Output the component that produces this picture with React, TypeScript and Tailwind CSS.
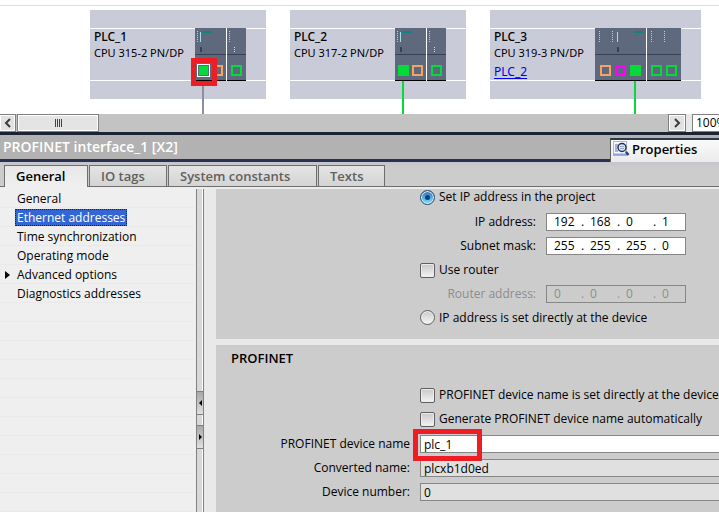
import React from "react";

type Port = { x: number; color: string; filled?: boolean; selected?: boolean };

function Ports({ ports }: { ports: Port[] }) {
  return (
    <>
      {ports.map((p) => (
        <g key={p.x}>
          {p.selected && (
            <path d={`M${p.x - 1.5} 36.500h12v12h-12z`} fill="#5f697d" stroke="#fff" />
          )}
          {p.filled ? (
            <rect
              x={p.selected ? p.x : p.x}
              y={p.selected ? 38 : 37}
              width={p.selected ? 9 : 11}
              height={p.selected ? 9 : 11}
              fill={p.color}
            />
          ) : (
            <rect x={p.x + 1} y="38" width="9" height="9" fill="none" stroke={p.color} strokeWidth="2" />
          )}
        </g>
      ))}
    </>
  );
}

function Module({
  width,
  dots,
  ports,
  label,
  led,
  bar,
  shortDots,
}: {
  width: number;
  dots: number[];
  ports: Port[];
  label: string;
  led?: number;
  bar?: number;
  shortDots?: number;
}) {
  return (
    <svg width={width} height="53" viewBox={`0 0 ${width} 53`} role="img" aria-label={label} shapeRendering="crispEdges">
      <rect width={width} height="53" fill="#5f697d" />
      {dots.map((x) => (
        <line key={x} x1={x + 0.5} x2={x + 0.5} y1="3" y2="14" stroke="#c3cad6" strokeDasharray="1 1" />
      ))}
      {led !== undefined && (
        <>
          <rect x={led} y="4" width="1" height="10" fill="#a8dbe2" />
          <rect x={led} y="19" width="2" height="5" fill="#394254" />
        </>
      )}
      {bar !== undefined && <rect x={bar} y="3" width="9" height="2" fill="#118080" />}
      {shortDots !== undefined && (
        <line x1={shortDots + 0.5} x2={shortDots + 0.5} y1="19" y2="24" stroke="#d5dae3" strokeDasharray="1 1" />
      )}
      <rect y="26" width={width} height="1" fill="#394254" />
      <rect y="52" width={width} height="1" fill="#000" />
      <Ports ports={ports} />
    </svg>
  );
}

const GREEN = "#06d93a";
const ORANGE = "#f4a460";
const MAGENTA = "#ff00ff";

function Rack({
  name,
  type,
  link,
  children,
  cable,
}: {
  name: string;
  type: string;
  link?: string;
  children: React.ReactNode;
  cable: React.ReactNode;
}) {
  return (
    <section className="relative shrink-0" aria-label={name}>
      <div className="bg-[#c9cbd9] pt-[18px] pb-[18px]">
        <div className="flex h-[53px] border-y border-white pr-5">
          <div className="w-[105px] pl-1 font-['Noto_Sans','Open_Sans',sans-serif] text-[12px] leading-4">
            <h2 className="font-medium">{name}</h2>
            <p className="text-[11px] leading-[15px] whitespace-nowrap">{type}</p>
            {link && (
              <a href="#plc2" className="mt-1 inline-block text-[#0000ee] underline underline-offset-2">
                {link}
              </a>
            )}
          </div>
          <div className="-my-px flex gap-px bg-white">{children}</div>
        </div>
      </div>
      {cable}
    </section>
  );
}

function NetworkView() {
  return (
    <main className="overflow-hidden bg-white pt-[5px]">
      <div className="flex h-[109px] items-start gap-6 border-t border-[#dedede] pt-1 pl-[90px]">
        <Rack
          name="PLC_1"
          type="CPU 315-2 PN/DP"
          cable={
            <>
              <div className="absolute top-[71px] left-[112px] h-[33px] w-[2px] bg-[#8a90a0]" />
              <div className="absolute top-12 left-[101px] h-7 w-[26px] border-5 border-[#ee1c24]" />
            </>
          }
        >
          <Module
            label="CPU"
            width={31}
            dots={[2]}
            led={5}
            bar={7}
            ports={[
              { x: 4, color: GREEN, filled: true, selected: true },
              { x: 17, color: ORANGE },
            ]}
          />
          <Module label="Interface" width={19} dots={[2]} shortDots={7} ports={[{ x: 4, color: GREEN }]} />
        </Rack>
        <Rack
          name="PLC_2"
          type="CPU 317-2 PN/DP"
          cable={<div className="absolute top-[71px] left-[112px] h-[33px] w-[2px] bg-[#06d93a]" />}
        >
          <Module
            label="CPU"
            width={31}
            dots={[2]}
            led={5}
            bar={7}
            ports={[
              { x: 3, color: GREEN, filled: true },
              { x: 17, color: ORANGE },
            ]}
          />
          <Module label="Interface" width={19} dots={[2]} shortDots={7} ports={[{ x: 4, color: GREEN }]} />
        </Rack>
        <Rack
          name="PLC_3"
          type="CPU 319-3 PN/DP"
          link="PLC_2"
          cable={<div className="absolute top-[71px] left-36 h-[33px] w-[2px] bg-[#06d93a]" />}
        >
          <Module
            label="CPU"
            width={51}
            dots={[4, 17]}
            led={22}
            bar={39}
            ports={[
              { x: 5, color: ORANGE },
              { x: 20, color: MAGENTA },
              { x: 35, color: GREEN, filled: true },
            ]}
          />
          <Module
            label="Interface"
            width={34}
            dots={[4, 17]}
            ports={[
              { x: 4, color: GREEN },
              { x: 19, color: GREEN },
            ]}
          />
        </Rack>
      </div>
    </main>
  );
}

function Chevron({ right }: { right?: boolean }) {
  return (
    <svg width="8" height="10" viewBox="0 0 8 10" fill="none" stroke="#3c3c3c" strokeWidth="2">
      <path d={right ? "M2 1l4 4-4 4" : "M6 1L2 5l4 4"} />
    </svg>
  );
}

function ScrollRow() {
  return (
    <div className="flex h-[18px] bg-[#e8e8e8]">
      <div className="flex flex-1 bg-[#c3c3c3]">
        <button
          aria-label="Scroll left"
          className="flex w-4 items-center justify-center border border-l-0 border-[#808080] bg-[#e2e2e2] inset-ring inset-ring-white"
        >
          <Chevron />
        </button>
        <button
          aria-label="Scroll position"
          className="ml-px flex w-[82px] items-center justify-center gap-px border border-[#808080] bg-[#e4e4e4] inset-ring inset-ring-white"
        >
          <i className="h-2 w-px bg-[#444]" />
          <i className="h-2 w-px bg-[#444]" />
          <i className="h-2 w-px bg-[#444]" />
          <i className="h-2 w-px bg-[#444]" />
        </button>
      </div>
      <button
        aria-label="Scroll right"
        className="flex w-[18px] items-center justify-center border border-[#808080] bg-[#e2e2e2] inset-ring inset-ring-white"
      >
        <Chevron right />
      </button>
      <input
        aria-label="Zoom"
        defaultValue="100%"
        className="ml-1.5 w-[27px] border border-r-0 border-[#808080] bg-white pl-[3px] text-[12px]"
      />
    </div>
  );
}

function PropertiesIcon() {
  return (
    <svg width="17" height="16" viewBox="0 0 17 16" fill="none">
      <rect x="0.5" y="0.5" width="13" height="14" fill="#f4f7ff" stroke="#a9b9e4" />
      <path d="M2 4h3M2 6h2M2 8h2M2 10h3" stroke="#5a6ea5" />
      <path d="M0 13.500h14" stroke="#8fa5e0" strokeWidth="2" />
      <circle cx="9" cy="6.500" r="4" fill="#dbe8f8" stroke="#26304a" strokeWidth="1.500" />
      <path d="M7 5.500h4M7 7.500h4" stroke="#8fa5d0" />
      <path d="M12 9.500l1.500 1.500" stroke="#e0a030" strokeWidth="2" />
      <path d="M13 11l2.500 3" stroke="#26407c" strokeWidth="2.500" />
    </svg>
  );
}

function TitleBar() {
  return (
    <header className="flex h-[30px] border-t-3 border-[#1c2335] bg-[#b2b2b2]">
      <h1 className="flex-1 border-b-3 border-[#2b304e] pl-[3px] text-[14px] leading-6 font-semibold text-white">
        PROFINET interface_1 [X2]
      </h1>
      <div className="w-[109px] pt-[3px]">
        <button className="flex h-6 w-full items-center gap-[2px] border-t-2 border-l border-t-[#2c3a48] border-l-[#606060] bg-linear-to-b from-[#fafafa] to-[#ebebeb] pb-1 pl-[2px] text-[13px] leading-5 font-semibold">
          <PropertiesIcon />
          Properties
        </button>
      </div>
    </header>
  );
}

function Tabs() {
  return (
    <nav className="bg-linear-to-b from-[#c4c4cc] to-[#cccccc] to-20%" aria-label="Property tabs">
      <div className="flex h-[25px] items-end gap-px border-b border-[#6e6e6e] pl-1 text-[13px] leading-5 font-semibold text-[#606060]">
        <button className="relative -mb-px flex h-[22px] w-[84px] border border-b-0 border-[#6e6e6e] bg-linear-to-b from-[#e8e8e8] to-[#efefef] pl-[11px] text-black">
          General
        </button>
        <button className="flex h-[21px] w-[78px] border border-b-0 border-[#6e6e6e] bg-linear-to-b from-[#e4e4e4] to-[#d4d4d4] pl-[11px]">
          IO tags
        </button>
        <button className="flex h-[21px] w-[149px] border border-b-0 border-[#6e6e6e] bg-linear-to-b from-[#e4e4e4] to-[#d4d4d4] pl-[11px]">
          System constants
        </button>
        <button className="flex h-[21px] w-[67px] border border-b-0 border-[#6e6e6e] bg-linear-to-b from-[#e4e4e4] to-[#d4d4d4] pl-[11px]">
          Texts
        </button>
      </div>
      <div className="flex h-[2px]">
        <div className="w-[204px] bg-[#efefef]" />
        <div className="flex-1 bg-[#ececec]" />
      </div>
    </nav>
  );
}

const TREE = [
  "General",
  "Ethernet addresses",
  "Time synchronization",
  "Operating mode",
  "Advanced options",
  "Diagnostics addresses",
];

function Tree() {
  const rows = Array.from({ length: 17 }, (_, i) => TREE[i] ?? "");
  return (
    <ul className="w-[196px] shrink-0 bg-[#efefef] text-[12px] leading-[17px]">
      {rows.map((row, i) => (
        <li key={i} className="mr-[2px] flex h-[19px] items-center border-b border-[#e9e9e9] pt-px">
          <span className="flex w-[15px] justify-center">
            {row === "Advanced options" && (
              <svg width="5" height="8" viewBox="0 0 5 8">
                <path d="M0 0l5 4-5 4z" />
              </svg>
            )}
          </span>
          {row &&
            (i === 1 ? (
              <button className="border border-dotted border-[#222] bg-[#3465d4] px-px leading-[15px] text-white">
                {row}
              </button>
            ) : (
              <button className="px-[2px]">{row}</button>
            ))}
        </li>
      ))}
    </ul>
  );
}

function Splitter() {
  return (
    <div className="flex w-2 shrink-0 flex-col border-x border-[#808080] bg-[#d8d8d8] pt-[202px] inset-shadow-[-1px_0_0_#fff]">
      <button
        aria-label="Collapse left"
        className="flex h-6 items-center justify-center border-y border-[#808080] bg-linear-to-b from-[#a8a8a8] to-[#e0e0e0]"
      >
        <svg width="3" height="6" viewBox="0 0 3 6">
          <path d="M3 0L0 3l3 3z" />
        </svg>
      </button>
      <button
        aria-label="Expand right"
        className="mt-2.5 flex h-6 items-center justify-center border-y border-[#808080] bg-linear-to-b from-[#a8a8a8] to-[#e0e0e0]"
      >
        <svg width="3" height="6" viewBox="0 0 3 6">
          <path d="M0 0l3 3-3 3z" />
        </svg>
      </button>
    </div>
  );
}

function Check({ label }: { label: string }) {
  return (
    <label className="ml-[204px] flex h-6 items-center gap-1 whitespace-nowrap">
      <input
        type="checkbox"
        className="size-[15px] shrink-0 appearance-none rounded-[2px] border border-[#606060] bg-linear-to-b from-[#c8c8c8] to-[#f4f4f4] inset-ring inset-ring-[#ececec]"
      />
      {label}
    </label>
  );
}

function Radio({ label, checked }: { label: string; checked?: boolean }) {
  return (
    <label className="ml-[204px] flex items-center gap-1 whitespace-nowrap">
      <span className="grid size-[15px] shrink-0 place-items-center">
        <input
          type="radio"
          name="ip-mode"
          defaultChecked={checked}
          className="col-start-1 row-start-1 size-[15px] appearance-none rounded-full border border-[#606060] bg-linear-to-b from-[#c8c8c8] to-[#f8f8f8] inset-ring inset-ring-[#eeeeee] checked:border-[#2f4a66] checked:from-[#2f6fc0] checked:to-[#7fe6fa] checked:inset-ring-[#e4f2fb]"
        />
        {checked && <i className="z-10 col-start-1 row-start-1 size-[5px] rounded-full bg-[#0a3f80]" />}
      </span>
      {label}
    </label>
  );
}

function IpField({ label, octets, disabled }: { label: string; octets: string[]; disabled?: boolean }) {
  return (
    <div
      role="group"
      aria-label={label}
      className={disabled ? "flex h-6 items-center gap-2.5 text-[#8c8c8c]" : "flex h-6 items-center gap-2.5"}
    >
      <span className="w-80 shrink-0 text-right">{label}</span>
      <div
        className={
          disabled
            ? "flex h-[18px] w-[140px] items-center border border-[#868686] pl-[7px]"
            : "flex h-[18px] w-[140px] items-center border border-[#868686] bg-white pl-[7px]"
        }
      >
        {octets.map((o, i) => (
          <React.Fragment key={i}>
            <input
              aria-label={`${label} octet ${i + 1}`}
              defaultValue={o}
              disabled={disabled}
              className="h-4 w-[27px] shrink-0 bg-transparent last:w-[23px]"
            />
            {i < 3 && <span className="w-[9px] shrink-0">.</span>}
          </React.Fragment>
        ))}
      </div>
    </div>
  );
}

function TextRow({ id, label, value, readOnly }: { id: string; label: string; value: string; readOnly?: boolean }) {
  return (
    <div className="flex h-6 items-center gap-2.5">
      <label htmlFor={id} className="w-[194px] shrink-0 text-right">
        {label}
      </label>
      <input
        id={id}
        defaultValue={value}
        readOnly={readOnly}
        className={
          readOnly
            ? "h-[18px] min-w-0 flex-1 border border-r-0 border-[#868686] bg-[#e0e0e0] pl-[3px]"
            : "h-[18px] min-w-0 flex-1 border border-r-0 border-[#868686] bg-white pl-[3px]"
        }
      />
    </div>
  );
}

function Form() {
  return (
    <div className="flex min-w-0 flex-1 flex-col gap-1.5 overflow-hidden bg-[#e9e9e9] pl-3 text-[12px] leading-4">
      <section className="bg-[#cccccc] pb-[10px]">
        <div className="pb-[5px]">
          <Radio label="Set IP address in the project" checked />
        </div>
        <IpField label="IP address:" octets={["192", "168", "0", "1"]} />
        <IpField label="Subnet mask:" octets={["255", "255", "255", "0"]} />
        <Check label="Use router" />
        <IpField label="Router address:" octets={["0", "0", "0", "0"]} disabled />
        <div className="flex h-[23px] items-center">
          <Radio label="IP address is set directly at the device" />
        </div>
      </section>
      <section className="flex-1 bg-[#cccccc]">
        <h2 className="h-[38px] pt-[3px] pl-[15px] text-[13px] leading-5 font-semibold">PROFINET</h2>
        <Check label="PROFINET device name is set directly at the device" />
        <Check label="Generate PROFINET device name automatically" />
        <div className="relative pt-px">
          <TextRow id="device-name" label="PROFINET device name" value="plc_1" />
          <div className="pointer-events-none absolute -top-[2px] left-[197px] h-8 w-[69px] border-5 border-[#ee1c24]" />
          <TextRow id="converted-name" label="Converted name:" value="plcxb1d0ed" readOnly />
          <TextRow id="device-number" label="Device number:" value="0" readOnly />
        </div>
      </section>
    </div>
  );
}

export default function App() {
  return (
    <div className="flex min-h-screen flex-col bg-[#efefef] font-['Open_Sans','Noto_Sans',sans-serif] text-black">
      <NetworkView />
      <ScrollRow />
      <TitleBar />
      <Tabs />
      <div className="flex flex-1">
        <Tree />
        <Splitter />
        <Form />
      </div>
    </div>
  );
}
